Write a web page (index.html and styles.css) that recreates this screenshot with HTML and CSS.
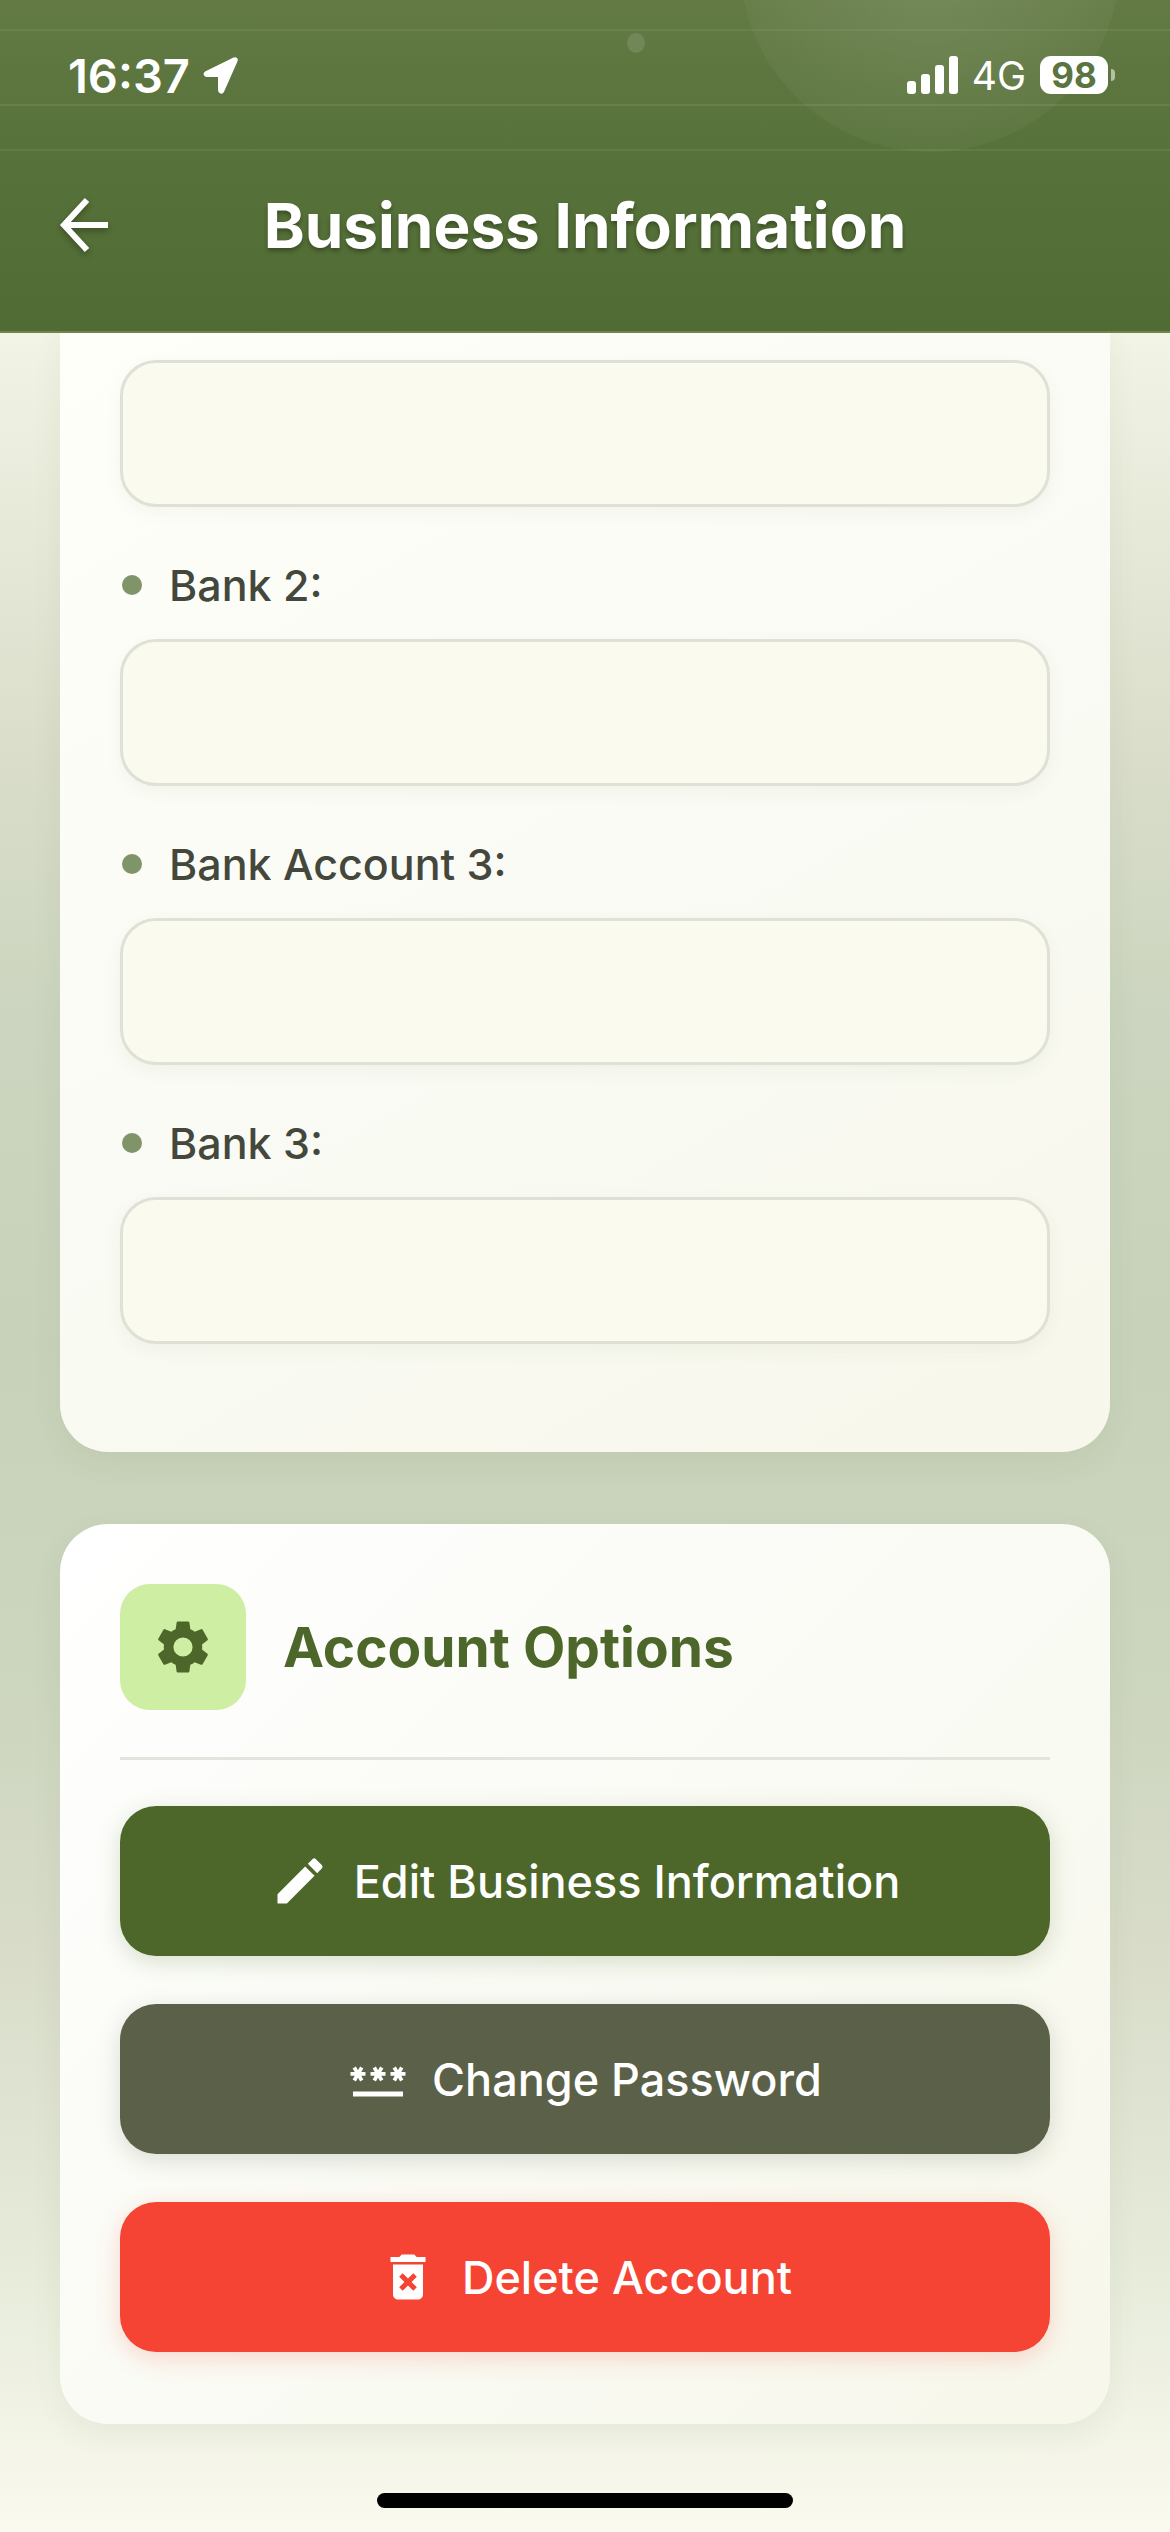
FILE: index.html
```html
<!DOCTYPE html>
<html lang="en">
<head>
<meta charset="utf-8">
<meta name="viewport" content="width=device-width, initial-scale=1">
<title>Business Information</title>
<link rel="stylesheet" href="styles.css">
</head>
<body>
<div class="screen">
  <header class="header">
    <span class="glow"></span>
    <span class="speck"></span>
    <div class="status">
      <div class="status-side">
        <span class="clock">16:37</span>
        <svg class="location" viewBox="0 0 36 40" aria-hidden="true"><path d="M32 3.500L3.500 17.500C2 18.500 2.500 21 4.500 21H17V35C17 38 20 38.500 21 36.500L34.500 6C35.300 4 34 2.700 32 3.500Z" fill="#fff" stroke="#fff" stroke-width="2" stroke-linejoin="round"/></svg>
      </div>
      <div class="status-side">
        <svg class="signal" viewBox="0 0 52 38" aria-hidden="true" fill="#fff"><rect x="0" y="25" width="9" height="13" rx="3"/><rect x="14" y="18" width="9" height="20" rx="3"/><rect x="28" y="9" width="9" height="29" rx="3"/><rect x="42" y="0" width="9" height="38" rx="3"/></svg>
        <span class="network">4G</span>
        <span class="battery">98</span>
      </div>
    </div>
    <div class="titlebar">
      <button class="back" type="button" aria-label="Back">
        <svg viewBox="0 0 48 48" aria-hidden="true"><path d="M27 -1L4 24L27 49M4 24H48" fill="none" stroke="#fff" stroke-width="6"/></svg>
      </button>
      <h1 class="title">Business Information</h1>
    </div>
  </header>

  <main class="content">
    <form class="card card-continued">
      <div class="field"><input class="input" type="text" aria-label="Bank Account 2"></div>
      <div class="field"><label class="label" for="bank2">Bank 2:</label><input class="input" id="bank2" type="text"></div>
      <div class="field"><label class="label" for="account3">Bank Account 3:</label><input class="input" id="account3" type="text"></div>
      <div class="field"><label class="label" for="bank3">Bank 3:</label><input class="input" id="bank3" type="text"></div>
    </form>

    <section class="card">
      <div class="card-head">
        <span class="badge">
          <svg viewBox="0 0 24 24" aria-hidden="true"><path fill="#4c6729" d="M19.140 12.940c.04-.3.060-.61.060-.94s-.02-.64-.07-.94l2.030-1.580a.49.490 0 0 0 .12-.61l-1.920-3.320a.49.490 0 0 0-.59-.22l-2.390.96a7 7 0 0 0-1.620-.94l-.36-2.540a.48.480 0 0 0-.48-.41h-3.840a.47.470 0 0 0-.47.41l-.36 2.540c-.59.240-1.130.57-1.620.94l-2.390-.96a.48.480 0 0 0-.59.220L2.740 8.870a.47.470 0 0 0 .12.610l2.030 1.580c-.05.3-.09.630-.09.940s.02.640.07.940l-2.030 1.580a.49.490 0 0 0-.12.610l1.920 3.320c.12.220.37.290.59.220l2.390-.96c.5.380 1.030.7 1.620.94l.36 2.540c.05.240.24.410.48.410h3.840c.24 0 .44-.17.470-.41l.36-2.540a7 7 0 0 0 1.620-.94l2.390.96c.22.080.47 0 .59-.22l1.920-3.320a.47.470 0 0 0-.12-.61zM12 15.600A3.600 3.600 0 1 1 12 8.400a3.600 3.600 0 0 1 0 7.200"/></svg>
        </span>
        <h2 class="heading">Account Options</h2>
      </div>
      <div class="actions">
        <button class="action action-edit" type="button">
          <svg viewBox="0 0 24 24" aria-hidden="true"><path fill="#fff" d="M3 17.250V21h3.750L17.810 9.940l-3.750-3.750zM20.710 7.040a1 1 0 0 0 0-1.410l-2.340-2.340a1 1 0 0 0-1.410 0l-1.830 1.830 3.750 3.750z"/></svg>
          Edit Business Information
        </button>
        <button class="action action-password" type="button">
          <svg viewBox="0 0 24 24" aria-hidden="true"><path fill="#fff" d="M2 17h20v2H2zm1.150-4.050L4 11.470l.85 1.480 1.300-.75-.85-1.480H7v-1.500H5.300l.85-1.470L4.850 7 4 8.470 3.150 7l-1.300.75.850 1.470H1v1.500h1.700l-.85 1.480zm6.700-.75 1.300.75.850-1.480.85 1.480 1.300-.75-.85-1.480H15v-1.500h-1.700l.85-1.470-1.300-.75L12 8.470 11.150 7l-1.300.75.850 1.470H9v1.500h1.700zM23 9.220h-1.700l.85-1.470-1.300-.75L20 8.470 19.150 7l-1.300.75.850 1.470H17v1.500h1.700l-.85 1.480 1.300.75.850-1.480.85 1.480 1.300-.75-.85-1.480H23z"/></svg>
          Change Password
        </button>
        <button class="action action-delete" type="button">
          <svg viewBox="0 0 24 24" aria-hidden="true"><path fill="#fff" fill-rule="evenodd" d="M6 19c0 1.100.9 2 2 2h8c1.100 0 2-.9 2-2V7H6zm2.460-7.120 1.410-1.410L12 12.590l2.120-2.120 1.410 1.410L13.410 14l2.120 2.120-1.410 1.410L12 15.410l-2.120 2.120-1.410-1.410L10.590 14zM15.500 4l-1-1h-5l-1 1H5v2h14V4z"/></svg>
          Delete Account
        </button>
      </div>
    </section>
  </main>

  <footer class="home"><span class="home-bar"></span></footer>
</div>
</body>
</html>
```

FILE: styles.css
```css
* { box-sizing: border-box; }

body {
  margin: 0;
  font-family: Inter, "Liberation Sans", sans-serif;
  color: #44483c;
}

.screen {
  display: flex;
  flex-direction: column;
  min-height: 100vh;
  background: linear-gradient(180deg, #fafaee 0%, #f2f4e6 13%, #d9ddc9 30%, #ccd5bf 40%, #c8d2ba 53%, #ccd5be 66%, #d8dcc9 77%, #e7ecdb 90%, #fafaee 100%);
}

/* Header */
.header {
  position: relative;
  overflow: hidden;
  height: 333px;
  border-bottom: 2px solid #71834e;
  background:
    linear-gradient(#6a804d, #6a804d) 0 29px / 100% 2px no-repeat,
    linear-gradient(#66804b, #66804b) 0 104px / 100% 2px no-repeat,
    linear-gradient(#627c47, #627c47) 0 149px / 100% 2px no-repeat,
    linear-gradient(180deg, #637a44 0%, #57723a 45%, #506b33 100%);
}
.glow {
  position: absolute;
  top: -228px;
  right: 50px;
  width: 380px;
  height: 380px;
  border-radius: 50%;
  background: radial-gradient(circle, rgba(255, 255, 255, 0.12), rgba(255, 255, 255, 0.04) 70%);
}
.speck {
  position: absolute;
  top: 33px;
  left: 627px;
  width: 18px;
  height: 20px;
  border-radius: 50%;
  background: #718757;
}
.status {
  position: relative;
  display: flex;
  justify-content: space-between;
  align-items: center;
  height: 150px;
  padding: 0 62px 0 68px;
  color: #fff;
}
.status-side { display: flex; align-items: center; }
.clock { font-size: 47px; font-weight: 600; }
.location { width: 36px; height: 40px; margin-left: 12px; }
.signal { width: 52px; height: 38px; margin-right: 13px; }
.network { font-size: 39px; }
.battery {
  position: relative;
  width: 68px;
  height: 38px;
  margin-left: 14px;
  border-radius: 11px;
  background: #fff;
  color: #5b7440;
  font-size: 35px;
  font-weight: 700;
  line-height: 38px;
  text-align: center;
}
.battery::after {
  content: "";
  position: absolute;
  top: 13px;
  right: -7px;
  width: 4px;
  height: 12px;
  border-radius: 0 4px 4px 0;
  background: #b3c0a3;
}
.titlebar {
  position: relative;
  display: grid;
  grid-template-columns: 48px 1fr 48px;
  align-items: center;
  height: 150px;
  padding: 0 60px;
}
.back {
  width: 48px;
  height: 48px;
  padding: 0;
  border: 0;
  background: none;
}
.back svg {
  display: block;
  width: 48px;
  height: 48px;
  overflow: visible;
  filter: drop-shadow(0 3px 3px rgba(0, 0, 0, 0.3));
}
.title {
  margin: 0;
  color: #fff;
  font-size: 62px;
  font-weight: 700;
  text-align: center;
  text-shadow: 0 3px 4px rgba(0, 0, 0, 0.3);
}

/* Cards */
.content {
  display: flex;
  flex-direction: column;
  gap: 72px;
  padding: 0 60px;
}
.card {
  padding: 60px 60px 72px;
  border-radius: 48px;
  background: linear-gradient(135deg, #ffffff 0%, #fafbf5 45%, #f7f7eb 100%);
  box-shadow: 0 10px 30px rgba(76, 103, 41, 0.07);
}
.card-continued {
  display: flex;
  flex-direction: column;
  gap: 48px;
  padding: 27px 60px 108px;
  border-radius: 0 0 48px 48px;
  background: linear-gradient(150deg, #fefff9 0%, #fafbf5 45%, #f7f7eb 100%);
}
.field { display: flex; flex-direction: column; gap: 24px; }
.label {
  display: flex;
  align-items: center;
  gap: 27px;
  padding-left: 2px;
  font-size: 43px;
  font-weight: 500;
  line-height: 60px;
}
.label::before {
  content: "";
  width: 20px;
  height: 20px;
  border-radius: 50%;
  background: #7f9468;
}
.input {
  width: 100%;
  height: 147px;
  padding: 0 45px;
  border: 3px solid #dfe1d6;
  border-radius: 36px;
  background: #fafaee;
  box-shadow: 0 6px 18px rgba(76, 103, 41, 0.05);
  color: inherit;
  font: inherit;
  font-size: 43px;
}

.card-head {
  display: flex;
  align-items: center;
  gap: 37px;
  padding-bottom: 47px;
  border-bottom: 3px solid #e2e4de;
}
.badge {
  display: grid;
  place-items: center;
  width: 126px;
  height: 126px;
  border-radius: 30px;
  background: #cdeea3;
}
.badge svg { width: 64px; height: 64px; }
.heading {
  margin: 0;
  color: #4c6729;
  font-size: 55px;
  font-weight: 700;
}

.actions {
  display: flex;
  flex-direction: column;
  gap: 48px;
  padding-top: 46px;
}
.action {
  display: flex;
  justify-content: center;
  align-items: center;
  gap: 24px;
  height: 150px;
  border: 0;
  border-radius: 36px;
  color: #fff;
  font: inherit;
  font-size: 45px;
  font-weight: 500;
}
.action svg { width: 60px; height: 60px; }
.action-edit { background: #4c6729; box-shadow: 0 6px 24px rgba(76, 103, 41, 0.2); }
.action-password { background: #5a6148; box-shadow: 0 6px 24px rgba(90, 97, 72, 0.2); }
.action-delete { background: #f54433; box-shadow: 0 6px 24px rgba(245, 68, 51, 0.2); }

.home {
  display: flex;
  justify-content: center;
  align-items: flex-end;
  flex: 1;
  padding-bottom: 24px;
}
.home-bar {
  width: 416px;
  height: 15px;
  border-radius: 8px;
  background: #000;
}
```
